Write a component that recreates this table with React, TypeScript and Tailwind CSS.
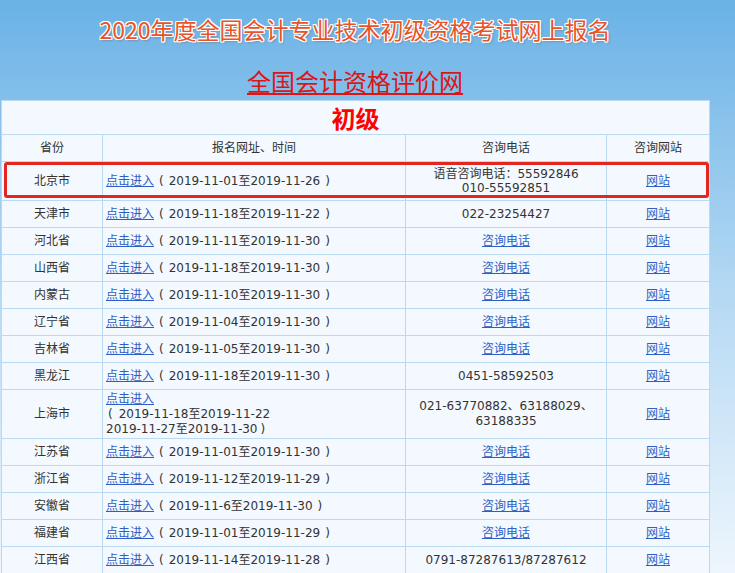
const rows: { p: string; d: string; phone: string; link?: boolean }[] = [
  { p: "天津市", d: "2019-11-18至2019-11-22", phone: "022-23254427" },
  { p: "河北省", d: "2019-11-11至2019-11-30", phone: "咨询电话", link: true },
  { p: "山西省", d: "2019-11-18至2019-11-30", phone: "咨询电话", link: true },
  { p: "内蒙古", d: "2019-11-10至2019-11-30", phone: "咨询电话", link: true },
  { p: "辽宁省", d: "2019-11-04至2019-11-30", phone: "咨询电话", link: true },
  { p: "吉林省", d: "2019-11-05至2019-11-30", phone: "咨询电话", link: true },
  { p: "黑龙江", d: "2019-11-18至2019-11-30", phone: "0451-58592503" },
];

const rows2: { p: string; d: string; phone: string; link?: boolean }[] = [
  { p: "江苏省", d: "2019-11-01至2019-11-30", phone: "咨询电话", link: true },
  { p: "浙江省", d: "2019-11-12至2019-11-29", phone: "咨询电话", link: true },
  { p: "安徽省", d: "2019-11-6至2019-11-30", phone: "咨询电话", link: true },
  { p: "福建省", d: "2019-11-01至2019-11-29", phone: "咨询电话", link: true },
  { p: "江西省", d: "2019-11-14至2019-11-28", phone: "0791-87287613/87287612" },
];

const td = "border border-[#b9daf1] px-[3px] py-0";
const lnk = "text-[#2f5fc4] underline";

function Dates({ d }: { d: string }) {
  return (
    <>
      <span className="mx-[5px]">(</span>
      {d}
      <span className="ml-[5px]">)</span>
    </>
  );
}

function Row({ p, d, phone, link }: { p: string; d: string; phone: string; link?: boolean }) {
  return (
    <tr className="h-[27px]">
      <td className={`${td} text-center`}>{p}</td>
      <td className={td}>
        <a className={lnk}>点击进入</a>
        <Dates d={d} />
      </td>
      <td className={`${td} text-center`}>{link ? <a className={lnk}>{phone}</a> : phone}</td>
      <td className={`${td} text-center`}>
        <a className={lnk}>网站</a>
      </td>
    </tr>
  );
}

export default function App() {
  return (
    <div
      className="min-h-screen w-full bg-gradient-to-b from-[#69b2e6] via-[#b3d8f3] to-[#eef6fd]"
      style={{ fontFamily: '"DejaVu Sans", "Noto Sans CJK SC", sans-serif' }}
    >
      <div className="w-[710px]">
        {/* heading */}
        <h1
          className="pt-[14px] text-center text-[23px] leading-[30px] text-[#e8532a]"
          style={{
            fontFamily: '"Noto Sans CJK SC", sans-serif',
            textShadow:
              "1px 0 0 #fff, -1px 0 0 #fff, 0 1px 0 #fff, 0 -1px 0 #fff, 1px 1px 0 #fff, -1px -1px 0 #fff, 1px -1px 0 #fff, -1px 1px 0 #fff, 2px 2px 2px rgba(120,80,60,0.35)",
          }}
        >
          2020年度全国会计专业技术初级资格考试网上报名
        </h1>
        <div
          className="mt-[21px] text-center text-[24px] leading-[32px]"
          style={{ fontFamily: '"Noto Sans CJK SC", sans-serif' }}
        >
          <a className="text-[#dc1515] underline decoration-[#dc1515]">全国会计资格评价网</a>
        </div>

        {/* table */}
        <div className="relative ml-[1px] mt-[3px]">
          <table className="w-[708px] table-fixed border-collapse bg-[#f3f9fe] text-[12px] leading-[15px] text-[#333]">
            <colgroup>
              <col className="w-[101px]" />
              <col className="w-[303px]" />
              <col className="w-[201px]" />
              <col className="w-[103px]" />
            </colgroup>
            <tbody>
              <tr className="h-[34px]">
                <td
                  colSpan={4}
                  className={`${td} text-center text-[24px] font-bold text-[#ff0000]`}
                  style={{ fontFamily: '"Noto Sans CJK SC", sans-serif' }}
                >
                  初级
                </td>
              </tr>
              <tr className="h-[27px]">
                <td className={`${td} text-center`}>省份</td>
                <td className={`${td} text-center`}>报名网址、时间</td>
                <td className={`${td} text-center`}>咨询电话</td>
                <td className={`${td} text-center`}>咨询网站</td>
              </tr>
              <tr className="h-[39px]">
                <td className={`${td} text-center`}>北京市</td>
                <td className={td}>
                  <a className={lnk}>点击进入</a>
                  <Dates d="2019-11-01至2019-11-26" />
                </td>
                <td className={`${td} text-center leading-[14px]`}>
                  语音咨询电话：55592846
                  <br />
                  010-55592851
                </td>
                <td className={`${td} text-center`}>
                  <a className={lnk}>网站</a>
                </td>
              </tr>
              {rows.map((r) => (
                <Row key={r.p} {...r} />
              ))}
              <tr className="h-[49px]">
                <td className={`${td} text-center`}>上海市</td>
                <td className={td}>
                  <a className={lnk}>点击进入</a>
                  <br />
                  <span className="ml-[2px] mr-[6px]">(</span>2019-11-18至2019-11-22
                  <br />
                  2019-11-27至2019-11-30
                  <span className="ml-[3px]">)</span>
                </td>
                <td className={`${td} text-center`}>
                  021-63770882、63188029、
                  <br />
                  63188335
                </td>
                <td className={`${td} text-center`}>
                  <a className={lnk}>网站</a>
                </td>
              </tr>
              {rows2.map((r) => (
                <Row key={r.p} {...r} />
              ))}
            </tbody>
          </table>

          {/* red highlight box */}
          <div className="pointer-events-none absolute left-[3px] top-[62px] h-[36px] w-[705px] rounded-[3px] border-[3px] border-[#e3261f]" />
        </div>
      </div>
    </div>
  );
}
